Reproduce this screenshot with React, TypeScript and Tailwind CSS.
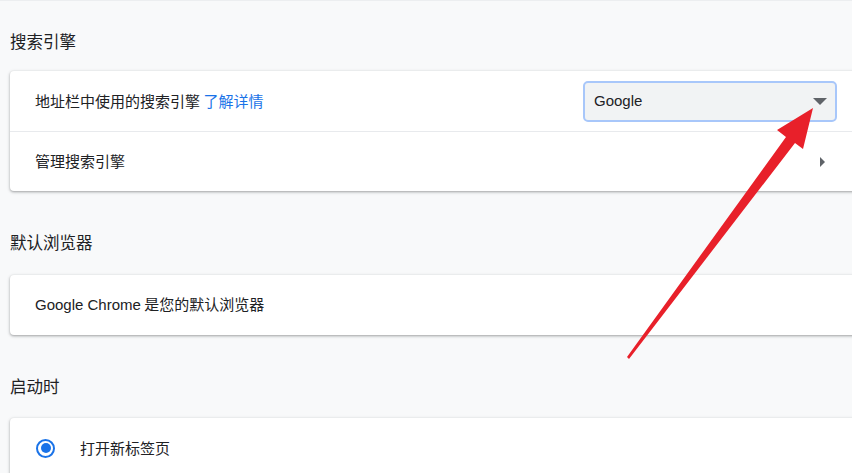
const font = { fontFamily: '"Noto Sans CJK SC", "Liberation Sans", sans-serif' };

function Heading({ children, className }: { children: React.ReactNode; className: string }) {
  return <div className={`text-[16.5px] leading-[22px] text-[#202124] ${className}`}>{children}</div>;
}

function Card({ children }: { children: React.ReactNode }) {
  return (
    <div className="w-[856px] rounded-[4px] bg-white shadow-[0_1px_2px_rgba(60,64,67,0.3),0_1px_3px_1px_rgba(60,64,67,0.15)]">
      {children}
    </div>
  );
}

function RedArrow() {
  return (
    <svg className="pointer-events-none absolute inset-0" width="852" height="473" viewBox="0 0 852 473">
      <path d="M629 358 L627 356 L786 136 L777 129 L813 107 L803 148 L795 142 Z" fill="#e8202a" />
    </svg>
  );
}

export default function App() {
  return (
    <div
      className="relative h-[473px] w-[852px] overflow-hidden border-t border-[#eceef0] bg-[#f8f9fa] pl-[10px] text-[#202124]"
      style={font}
    >
      <Heading className="pt-[29px] pb-[19px]">搜索引擎</Heading>
      <Card>
        <div className="flex h-[60px] items-center justify-between pl-[25px] pr-[29px]">
          <span className="text-[15px]">
            地址栏中使用的搜索引擎 <span className="text-[#1a73e8]">了解详情</span>
          </span>
          <div className="flex h-[41px] w-[254px] items-center justify-between rounded-[5px] border-2 border-[#a8c7fa] bg-[#f1f3f4] pl-[9px] pr-[8px]">
            <span className="text-[15px]" style={{ fontFamily: '"Liberation Sans", sans-serif' }}>Google</span>
            <svg width="14" height="7" viewBox="0 0 14 7">
              <path d="M0 0 L14 0 L7 7 Z" fill="#5f6368" />
            </svg>
          </div>
        </div>
        <div className="flex h-[60px] items-center justify-between border-t border-[#e8eaed] pl-[25px] pr-[41px]">
          <span className="text-[15px]">管理搜索引擎</span>
          <svg width="5" height="10" viewBox="0 0 5 10">
            <path d="M0 0 L5 5 L0 10 Z" fill="#5f6368" />
          </svg>
        </div>
      </Card>

      <Heading className="pt-[40px] pb-[22px]">默认浏览器</Heading>
      <Card>
        <div className="flex h-[60px] items-center pl-[25px]">
          <span className="text-[15px]">
            <span style={{ fontFamily: '"Liberation Sans", sans-serif' }}>Google Chrome</span> 是您的默认浏览器
          </span>
        </div>
      </Card>

      <Heading className="pt-[40px] pb-[21px]">启动时</Heading>
      <Card>
        <div className="flex h-[60px] items-center pl-[26px]">
          <div className="flex h-[19px] w-[19px] items-center justify-center rounded-full border-2 border-[#1a73e8]">
            <div className="h-[10px] w-[10px] rounded-full bg-[#1a73e8]" />
          </div>
          <span className="ml-[25px] text-[15px]">打开新标签页</span>
        </div>
      </Card>

      <RedArrow />
    </div>
  );
}
